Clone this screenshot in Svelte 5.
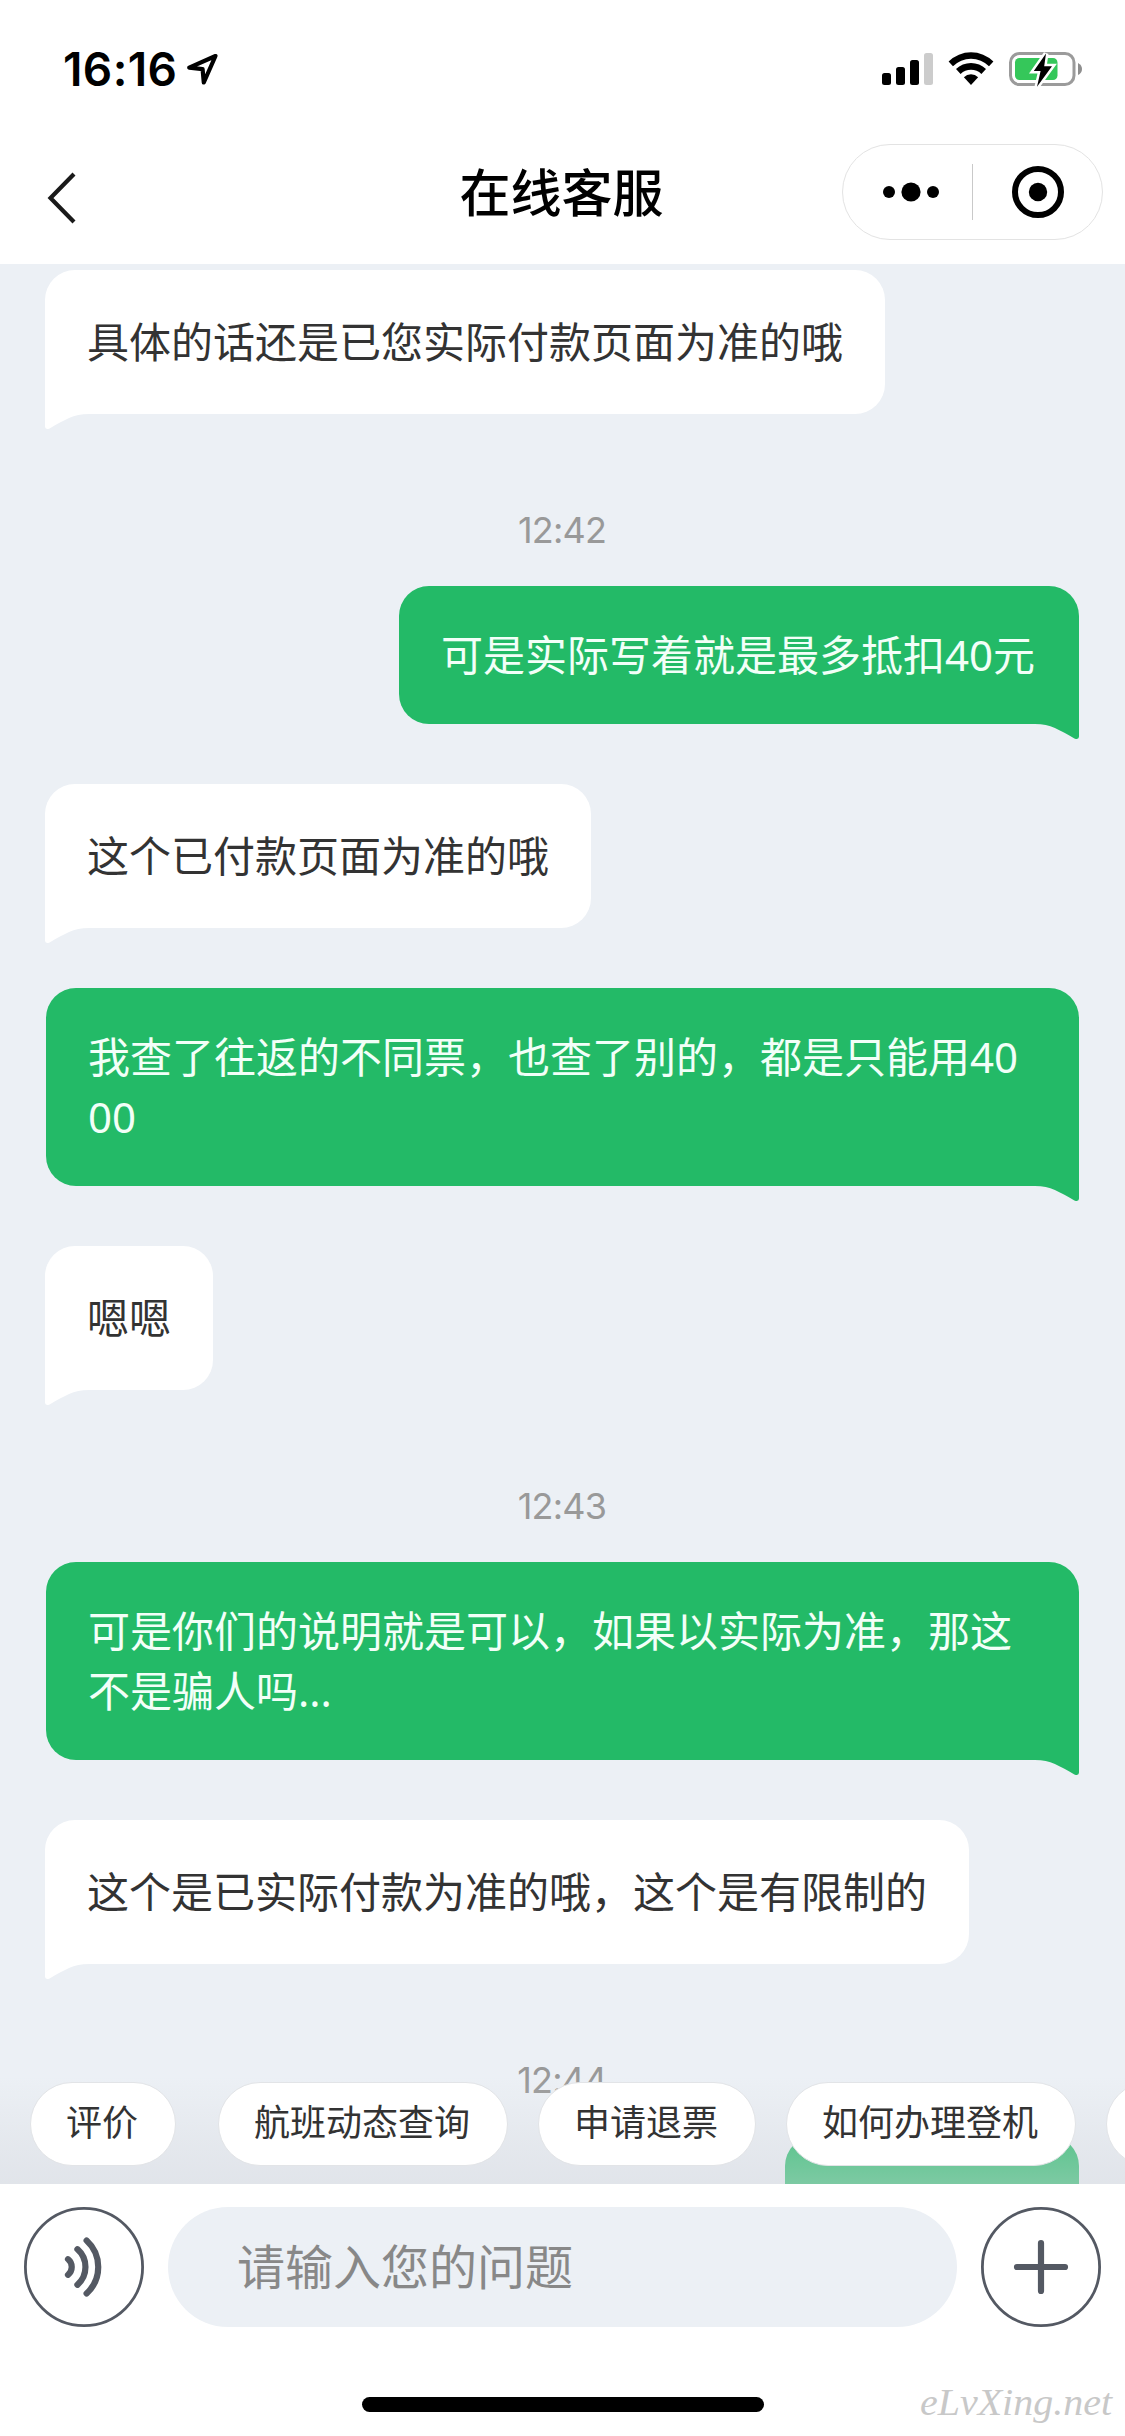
<script>
  const items = [
    { kind: 'in', text: '具体的话还是已您实际付款页面为准的哦' },
    { kind: 'time', text: '12:42' },
    { kind: 'out', text: '可是实际写着就是最多抵扣40元' },
    { kind: 'in', text: '这个已付款页面为准的哦' },
    { kind: 'out', text: '我查了往返的不同票，也查了别的，都是只能用4000' },
    { kind: 'in', text: '嗯嗯' },
    { kind: 'time', text: '12:43' },
    { kind: 'out', text: '可是你们的说明就是可以，如果以实际为准，那这不是骗人吗...' },
    { kind: 'in', text: '这个是已实际付款为准的哦，这个是有限制的' },
    { kind: 'time', text: '12:44' },
    { kind: 'out', text: '', width: 294 }
  ];

  const quickReplies = ['评价', '航班动态查询', '申请退票', '如何办理登机', ''];

  const bars = [
    { x: 0, height: 12 },
    { x: 14, height: 18 },
    { x: 28, height: 25 },
    { x: 42, height: 32, off: true }
  ];
</script>

<div class="phone">
  <header class="header">
    <div class="status">
      <div class="status__left">
        <span class="status__clock">16:16</span>
        <svg class="status__location" width="34" height="34" viewBox="0 0 34 34" aria-hidden="true">
          <path d="M29.5 4 L3.2 15.6 L16.6 17.2 L17.8 30.5 Z" />
        </svg>
      </div>
      <div class="status__right">
        <svg width="52" height="34" viewBox="0 0 52 34" aria-hidden="true">
          {#each bars as bar (bar.x)}
            <rect class="bar" class:bar--off={bar.off} x={bar.x} y={33 - bar.height} width="9" height={bar.height} rx="2.5" />
          {/each}
        </svg>
        <svg class="wifi" width="46" height="34" viewBox="0 0 46 34" aria-hidden="true">
          <path d="M0.6 9.4 A32 32 0 0 1 45.4 9.4 L41 14.2 A25.5 25.5 0 0 0 5 14.2 Z" />
          <path d="M8 17 A21.5 21.5 0 0 1 38 17 L33.4 21.9 A15 15 0 0 0 12.6 21.9 Z" />
          <path d="M15.9 25.2 A10 10 0 0 1 30.1 25.2 L23 33 Z" />
        </svg>
        <svg class="battery" width="74" height="38" viewBox="0 0 74 38" aria-hidden="true">
          <rect class="battery__case" x="1.5" y="3.5" width="63.5" height="31" rx="9" />
          <path class="battery__cap" d="M69 13 Q73 15 73 19 Q73 23 69 25 Z" />
          <rect class="battery__level" x="6" y="8" width="42.5" height="22" rx="4.5" />
          <path class="battery__gap" d="M37 3.6 L24.8 21 H31.6 L28 36.8 L43 16.2 H35.2 Z" />
          <path d="M37 3.6 L24.8 21 H31.6 L28 36.8 L43 16.2 H35.2 Z" />
        </svg>
      </div>
    </div>

    <nav class="nav">
      <svg class="nav__back" width="32" height="54" viewBox="0 0 32 54" aria-hidden="true">
        <path d="M28 3 L4.5 27 L28 51" />
      </svg>
      <h1 class="nav__title">在线客服</h1>
      <div class="capsule">
        <svg class="capsule__menu" width="54" height="20" viewBox="0 0 54 20" aria-hidden="true">
          <circle cx="5" cy="10" r="6" />
          <circle cx="27" cy="10" r="9.6" />
          <circle cx="49" cy="10" r="6" />
        </svg>
        <i class="capsule__divider"></i>
        <svg class="capsule__close" width="52" height="52" viewBox="0 0 52 52" aria-hidden="true">
          <circle class="capsule__ring" cx="26" cy="26" r="23" />
          <circle cx="26" cy="26" r="9.2" />
        </svg>
      </div>
    </nav>
  </header>

  <main class="chat">
    {#each items as item}
      {#if item.kind === 'time'}
        <time class="chat__time">{item.text}</time>
      {:else}
        <div class={`bubble bubble--${item.kind}`} style:width={item.width ? `${item.width}px` : null}>
          <p>{item.text}</p>
          <svg class="bubble__tail" width="44" height="17" viewBox="0 0 44 17" aria-hidden="true">
            <path d="M0 0 H44 V1 C28 1 20 7 4.6 15.4 Q0 17 0 13.5 Z" />
          </svg>
        </div>
      {/if}
    {/each}

    <div class="quick">
      {#each quickReplies as reply}
        <button class="quick__pill" type="button">{reply}</button>
      {/each}
    </div>
  </main>

  <footer class="footer">
    <div class="composer">
      <svg class="round" width="120" height="120" viewBox="0 0 120 120" aria-hidden="true">
        <circle cx="60" cy="60" r="58.6" />
        <path d="M44 52.2 A10 10 0 0 1 44 67.8" />
        <path d="M53.4 42.2 A23.7 23.7 0 0 1 53.4 77.8" />
        <path d="M62.6 33.5 A36 36 0 0 1 62.6 86.5" />
      </svg>
      <div class="composer__input">请输入您的问题</div>
      <svg class="round" width="120" height="120" viewBox="0 0 120 120" aria-hidden="true">
        <circle cx="60" cy="60" r="58.6" />
        <path d="M36 60 H84 M60 36 V84" />
      </svg>
    </div>
    <div class="home"></div>
    <svg class="watermark" width="204" height="56" viewBox="0 0 204 56">
      <text x="4" y="35" textLength="192" lengthAdjust="spacingAndGlyphs">eLvXing.net</text>
    </svg>
  </footer>
</div>

<style>
  :global(body) { margin: 0; background: #fff; }

  .phone {
    display: flex; flex-direction: column; width: 1125px; height: 2436px; overflow: hidden; background: #fff; color: #333;
    font-family: 'Noto Sans', 'Noto Sans CJK SC', sans-serif;
  }

  .header { flex: none; height: 264px; }
  .status { display: flex; justify-content: space-between; box-sizing: border-box; height: 120px; padding: 18px 42px 0 63px; }
  .status__left, .status__right { display: flex; align-items: center; }
  .status__clock { color: #000; font: 600 46px/54px Inter, sans-serif; letter-spacing: 0.4px; }
  .status__location { margin-left: 9px; }
  .status__location path { fill: none; stroke: #000; stroke-width: 4.2; stroke-linejoin: round; }
  .bar--off { fill: #ccc; }
  .wifi { margin-left: 14px; }
  .battery { margin-left: 15px; }
  .battery__case { fill: none; stroke: #9b9b9b; stroke-width: 3; }
  .battery__cap { fill: #8e8e8e; }
  .battery__level { fill: #35c75a; }
  .battery__gap { fill: #fff; stroke: #fff; stroke-width: 5; }

  .nav { display: grid; grid-template-columns: 1fr auto 1fr; align-items: center; height: 144px; padding: 0 22px 0 46px; }
  .nav__back { margin-top: 12px; }
  .nav__back path { fill: none; stroke: #1a1a1a; stroke-width: 4.2; }
  .nav__title { margin: 0 26px 0 0; color: #000; font-size: 51px; font-weight: 500; line-height: 72px; }
  .capsule {
    display: flex; align-items: center; justify-self: end; box-sizing: border-box; width: 261px; height: 96px;
    padding-left: 41px; border: 1px solid #e3e3e3; border-radius: 48px;
  }
  .capsule__menu { overflow: visible; }
  .capsule__divider { width: 1px; height: 56px; margin-left: 34px; background: #c9c9c9; }
  .capsule__close { margin-left: 39px; }
  .capsule__ring { fill: none; stroke: #000; stroke-width: 6; }

  .chat {
    position: relative; display: flex; flex: none; flex-direction: column; align-items: flex-start; box-sizing: border-box;
    height: 1920px; padding: 6px 46px 0 45px; overflow: hidden; background: #ecf0f5;
  }
  .chat__time { align-self: center; margin: 32px 0 32px; color: #999; font: 400 36px/48px Inter, sans-serif; letter-spacing: -0.8px; }
  .bubble { position: relative; flex: none; box-sizing: border-box; max-width: 1033px; margin-bottom: 60px; border-radius: 30px; font-size: 42px; line-height: 60px; }
  .bubble p { min-height: 60px; margin: 0; word-break: break-all; }
  .bubble--in { padding: 42px; border-bottom-left-radius: 0; background: #fff; color: #333; }
  .bubble--out { align-self: flex-end; padding: 39px 44px 39px 42px; border-bottom-right-radius: 0; background: #23ba67; color: #f2fff8; }
  .bubble__tail { position: absolute; top: calc(100% - 1px); left: 0; fill: #fff; }
  .bubble--out .bubble__tail { right: 0; left: auto; fill: #23ba67; transform: scaleX(-1); }

  .quick {
    position: absolute; right: 0; bottom: 0; left: 0; display: flex; gap: 30px; box-sizing: border-box; height: 122px; padding: 20px 0 0 30px; overflow: hidden;
    background: linear-gradient(180deg, rgba(214, 217, 223, 0) 12%, rgba(214, 217, 223, 0.34) 66%, rgba(214, 217, 223, 0.5) 100%);
  }
  .quick__pill {
    flex: none; box-sizing: border-box; min-width: 146px; height: 84px; padding: 0 37px 2px 35px; border: 1px solid #e2e4e7; border-radius: 42px;
    background: #fff; color: #333; font-family: inherit; font-size: 36px; line-height: 78px;
  }
  .quick__pill:first-child { margin-right: 12px; }

  .footer { position: relative; flex: none; box-sizing: border-box; height: 252px; padding: 23px 24px 0; background: #fff; }
  .composer { display: flex; align-items: center; gap: 24px; height: 120px; }
  .composer__input { flex: 1; height: 120px; padding-left: 69px; border-radius: 60px; background: #ecf0f5; color: #888; font-size: 48px; line-height: 119px; }
  .round { flex: none; fill: none; stroke: #545963; stroke-linecap: round; }
  .round circle { stroke-width: 2.8; }
  .round path { stroke-width: 6.2; }
  .home { width: 402px; height: 15px; margin: 70px auto 0; border-radius: 8px; background: #000; }
  .watermark { position: absolute; right: 5px; bottom: 0; }
  .watermark text { fill: #c8c8c8; font: italic 38px 'Liberation Serif', cursive; }
</style>
